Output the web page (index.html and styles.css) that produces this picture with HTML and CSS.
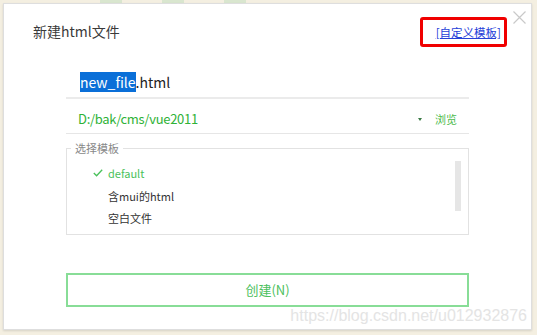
FILE: index.html
```html
<!DOCTYPE html>
<html lang="zh-CN">
<head>
<meta charset="utf-8">
<title>新建html文件</title>
<link rel="stylesheet" href="styles.css">
</head>
<body>
<div class="bg-strip"><span class="cell c1"></span><span class="cell c2"></span><span class="cell c3"></span></div>
<div class="dialog">
  <header class="head">
    <h1 class="title">新建html文件</h1>
    <div class="mark"><a class="tpl-link" href="#">[自定义模板]</a></div>
  </header>
  <button class="close" aria-label="关闭">
    <svg width="13" height="13" viewBox="0 0 13 13"><path d="M0.5 0.5 L12.5 12.5 M12.5 0.5 L0.5 12.5" stroke="#c9c9c9" stroke-width="1.2" fill="none"/></svg>
  </button>
  <div class="form">
    <div class="row name-row"><span class="sel">new_file</span>.html</div>
    <div class="row path-row">
      <span class="path">D:/bak/cms/vue2011</span>
      <span class="caret"></span>
      <span class="browse">浏览</span>
    </div>
    <fieldset class="tpl">
      <legend class="legend">选择模板</legend>
      <div class="tpl-body">
        <ul class="list">
          <li class="item active"><svg class="check" width="10" height="8" viewBox="0 0 10 8"><path d="M0.8 4 L3.6 6.8 L9.2 0.8" stroke="#49c15a" stroke-width="1.3" fill="none"/></svg>default</li>
          <li class="item">含mui的html</li>
          <li class="item">空白文件</li>
        </ul>
        <div class="scroll"></div>
      </div>
    </fieldset>
    <button class="create">创建(N)</button>
  </div>
  <div class="watermark">https://blog.csdn.net/u012932876</div>
</div>
</body>
</html>
```
FILE: styles.css
```css
html, body {
  margin: 0;
  padding: 0;
}
body {
  width: 537px;
  height: 335px;
  background: #f4efe1;
  font-family: "Noto Sans CJK SC", "Noto Sans", sans-serif;
  position: relative;
  overflow: hidden;
}
.bg-strip {
  height: 3px;
  display: flex;
  gap: 40px;
  padding-left: 100px;
}
.cell { height: 3px; width: 22px; background: #d9e6cf; }
.dialog {
  margin: 0 0 0 3px;
  width: 527px;
  height: 325px;
  border: 1px solid #dedede;
  background: #fff;
  box-shadow: 0 1px 2px rgba(0,0,0,0.12);
  position: relative;
  display: flex;
  flex-direction: column;
}
.head {
  height: 54px;
  display: flex;
  align-items: center;
  justify-content: space-between;
  padding: 0 24px 0 29px;
}
.title {
  margin: 0;
  font-size: 14px;
  font-weight: normal;
  color: #3a3a3a;
  line-height: 20px;
}
.mark {
  width: 78px;
  height: 24px;
  border: 3px solid #f00000;
  border-radius: 3px;
  display: flex;
  align-items: center;
  justify-content: flex-end;
  padding-right: 3px;
  box-sizing: content-box;
  margin-top: 2px;
}
.tpl-link {
  font-size: 11.5px;
  color: #2640d8;
  text-decoration: underline;
  line-height: 16px;
}
.close {
  position: absolute;
  top: 7px;
  right: 5px;
  border: 0;
  background: none;
  padding: 0;
  width: 13px;
  height: 13px;
  display: block;
}
.close svg { display: block; }
.form {
  width: 403px;
  margin-left: 62px;
  display: flex;
  flex-direction: column;
}
.row {
  display: flex;
  align-items: center;
}
.name-row {
  padding: 14px 0 5px 14px;
  line-height: 20px;
  font-size: 14px;
  color: #222;
  border-bottom: 2px solid #ebebeb;
}
.sel {
  background: #0a6fd8;
  color: #fff;
}
.path-row {
  padding: 10px 12px 4px 12px;
  line-height: 20px;
  border-bottom: 1px solid #e6e6e6;
}
.path {
  flex: 1;
  font-size: 13px;
  letter-spacing: -0.3px;
  color: #2fb237;
}
.caret {
  width: 0;
  height: 0;
  border-left: 2.5px solid transparent;
  border-right: 2.5px solid transparent;
  border-top: 3px solid #3b7a45;
  margin-right: 13px;
}
.browse {
  font-size: 11px;
  color: #4cbb4c;
}
.tpl {
  margin: 7px 0 0 0;
  padding: 0;
  border: 1px solid #e2e2e2;
  min-width: 0;
}
.legend {
  margin-left: 4px;
  padding: 0 4px;
  font-size: 11px;
  line-height: 14px;
  color: #888;
}
.tpl-body {
  display: flex;
  padding: 7px 7px 4px 0;
}
.list {
  list-style: none;
  margin: 0;
  padding: 0 0 0 41px;
  flex: 1;
}
.item {
  height: 22.5px;
  line-height: 22.5px;
  font-size: 11px;
  color: #333;
  position: relative;
}
.item.active { color: #49c15a; }
.check {
  position: absolute;
  left: -15px;
  top: 7px;
}
.scroll {
  width: 6px;
  height: 50px;
  background: #e6e6e6;
  margin-top: -1px;
}
.create {
  margin-top: 38px;
  height: 34px;
  border: 2px solid #88dd97;
  background: #fff;
  color: #4cc05d;
  font-family: "Noto Sans CJK SC", "Noto Sans", sans-serif;
  font-size: 13px;
  padding: 0;
}
.watermark {
  position: absolute;
  right: 4px;
  top: 303px;
  font-family: "Liberation Sans", Arial, sans-serif;
  font-size: 16px;
  line-height: 18px;
  color: #e4e4e4;
  white-space: nowrap;
}
```
